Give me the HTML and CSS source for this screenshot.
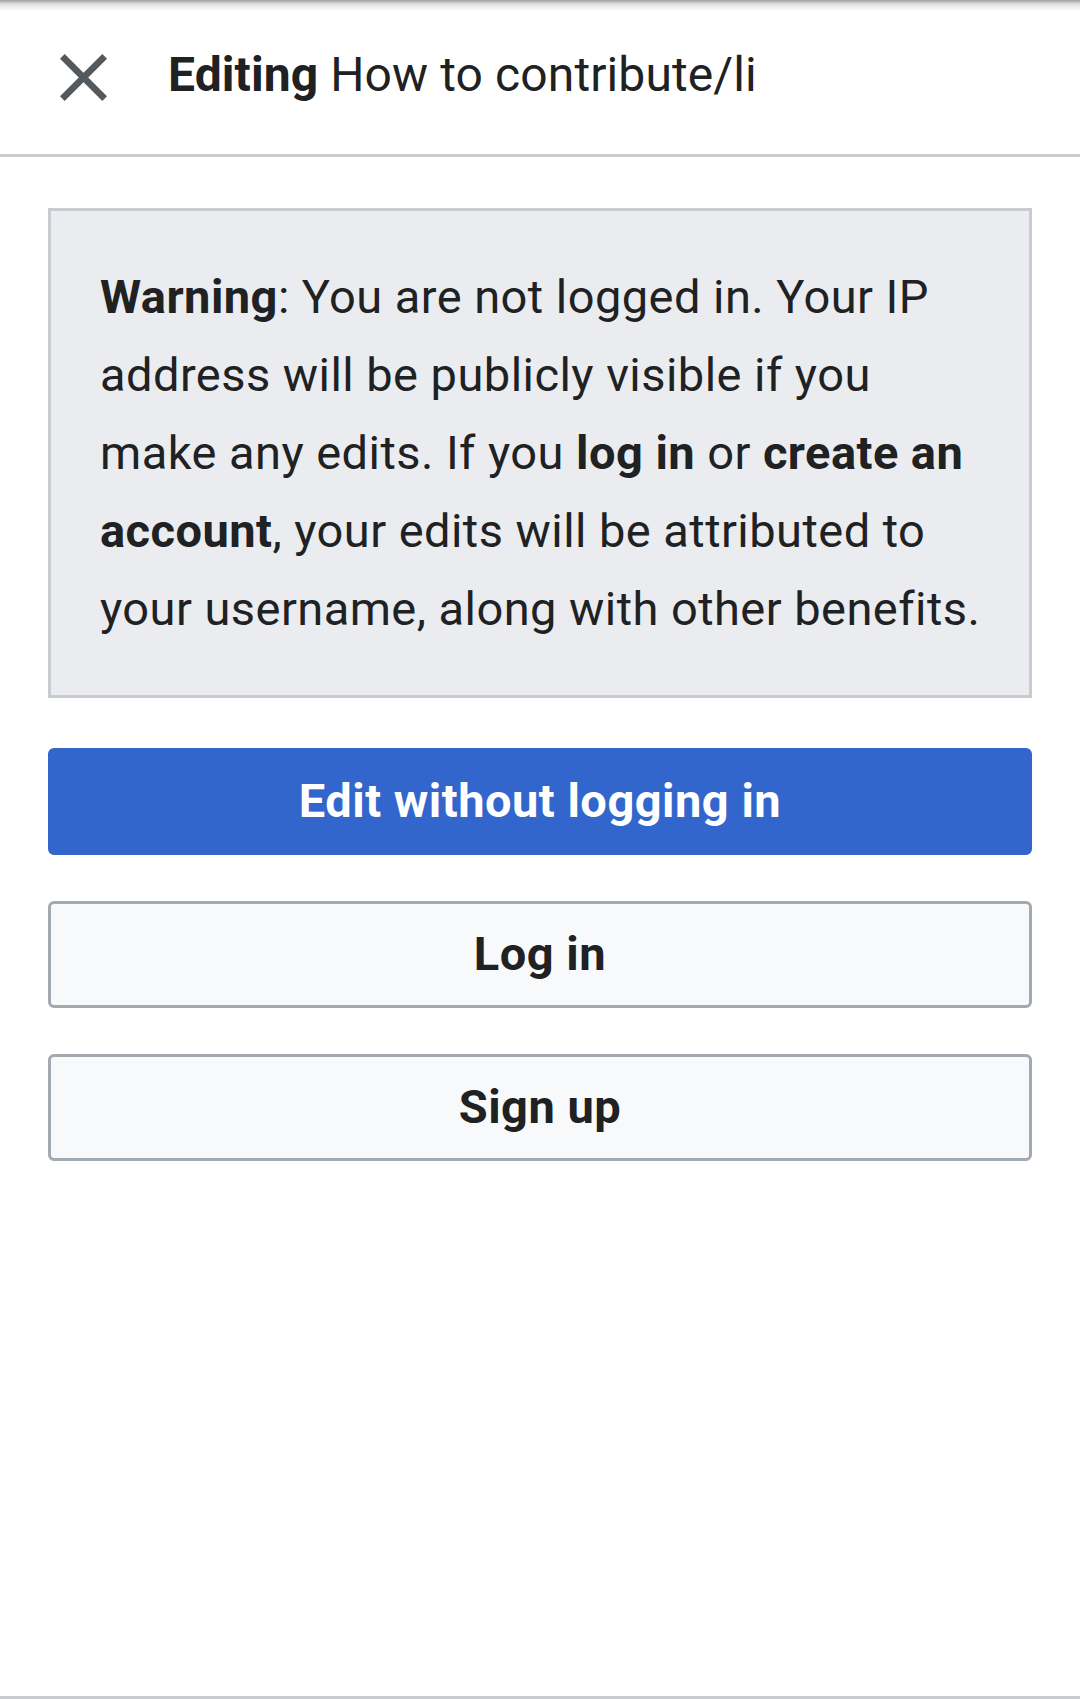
FILE: index.html
```html
<!DOCTYPE html>
<html lang="en">
<head>
<meta charset="utf-8">
<title>Editing How to contribute/li</title>
<link rel="stylesheet" href="styles.css">
</head>
<body>
<div class="page">
  <header class="header">
    <button class="close" aria-label="Close">
      <svg class="close-icon" viewBox="2.93 2.93 14.14 14.14" width="47" height="47" aria-hidden="true">
        <path d="M4.34 2.93 17.07 15.66 15.66 17.07 2.93 4.34Z M17.07 4.34 4.34 17.07 2.93 15.66 15.66 2.93Z" fill="#54595d"/>
      </svg>
    </button>
    <h1 class="title"><b>Editing</b> How to contribute/li</h1>
  </header>
  <main class="content">
    <div class="warning">
      <b>Warning</b>: You are not logged in. Your IP address will be publicly visible if you make any edits. If you <b>log in</b> or <b>create an account</b>, your edits will be attributed to your username, along with other benefits.
    </div>
    <div class="actions">
      <a class="btn btn-primary" href="#">Edit without logging in</a>
      <a class="btn btn-default" href="#">Log in</a>
      <a class="btn btn-default" href="#">Sign up</a>
    </div>
  </main>
</div>
</body>
</html>
```
FILE: styles.css
```css
html, body {
  margin: 0;
  padding: 0;
}
body {
  background: #fff;
  font-family: Roboto, "Liberation Sans", sans-serif;
  color: #202122;
}
.page {
  box-sizing: border-box;
  min-height: 100vh;
  border-bottom: 3px solid #c8ccd1;
  display: flex;
  flex-direction: column;
}
.header {
  box-sizing: border-box;
  height: 157px;
  display: flex;
  align-items: center;
  border-bottom: 3px solid #c8ccd1;
  background: linear-gradient(to bottom, rgba(0,0,0,0.38) 0px, rgba(0,0,0,0.12) 4px, rgba(0,0,0,0) 11px), #fff;
}
.close {
  margin: 0 0 0 60px;
  padding: 0;
  border: 0;
  background: none;
  width: 47px;
  height: 47px;
  display: flex;
  align-items: center;
  justify-content: center;
}
.close-icon {
  display: block;
}
.title {
  margin: 0 0 4px 61px;
  font-size: 48px;
  font-weight: 400;
  line-height: 60px;
  letter-spacing: 0.1px;
  white-space: nowrap;
  color: #202122;
}
.title b {
  font-weight: 700;
}
.content {
  padding: 51px 48px 0;
  display: flex;
  flex-direction: column;
}
.warning {
  background: #eaecf0;
  border: 3px solid #c8ccd1;
  padding: 47px 40px 47px 49px;
  font-size: 47px;
  line-height: 78px;
  letter-spacing: 0.45px;
  color: #202122;
}
.warning b {
  font-weight: 700;
}
.actions {
  margin-top: 50px;
  display: flex;
  flex-direction: column;
  gap: 46px;
}
.btn {
  box-sizing: border-box;
  height: 107px;
  display: flex;
  align-items: center;
  justify-content: center;
  border-radius: 6px;
  font-size: 47px;
  font-weight: 700;
  letter-spacing: 0.5px;
  text-decoration: none;
  padding-bottom: 2px;
}
.btn-primary {
  background: #36c;
  color: #fff;
  border: 3px solid #36c;
}
.btn-default {
  background: #f8f9fa;
  color: #202122;
  border: 3px solid #a2a9b1;
}
```
